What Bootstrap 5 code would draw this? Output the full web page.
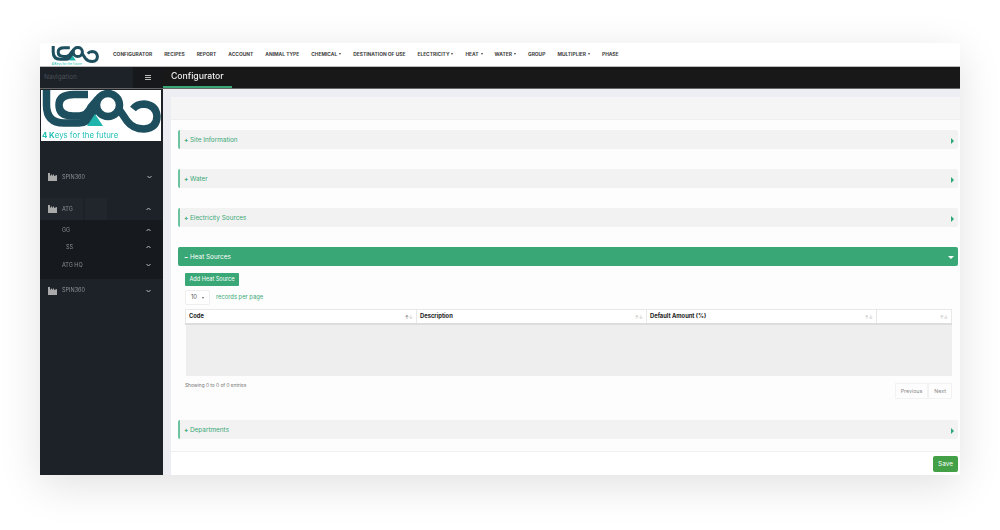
<!DOCTYPE html>
<html lang="en">
<head>
<meta charset="utf-8">
<title>Configurator</title>
<link rel="stylesheet" href="https://cdn.jsdelivr.net/npm/bootstrap@5.3.0/dist/css/bootstrap.min.css">
<style>
html,body{height:530px;overflow:hidden;background:#fff}
body{font-family:Inter,"Noto Sans",sans-serif;color:#555}
.app-frame{width:920px;height:432px;margin:43px 0 0 40px;box-shadow:0 10px 40px rgba(0,0,0,.12);background:#fff;overflow:hidden;display:flex;flex-direction:column;filter:blur(.3px)}
.top-nav{height:24px;flex:none;padding:0 0 0 11px;gap:12px;border-bottom:1px solid #bbb;background:#fff}
.top-logo{width:48px;height:20px;margin-top:2px;margin-right:2px}
.top-link{font-size:4.9px;font-weight:700;color:#444;text-decoration:none;white-space:nowrap}
.top-link.has-caret::after{content:"";display:inline-block;margin-left:2px;vertical-align:1px;border-top:2px solid #444;border-left:1.6px solid transparent;border-right:1.6px solid transparent}
.title-row{height:22px;flex:none;background:#181818;border-bottom:1px solid #666}
.nav-head{width:123px;background:#1c2227;color:#4a5058;font-size:6.5px;padding-left:4px;height:100%}
.nav-label{padding-top:1px}
.nav-burger{width:30px;height:100%;background:#16181b;margin-left:auto}
.title-tab{width:69px;height:100%;color:#eee;font-size:8.7px;font-weight:500;padding:1px 0 0 8px;border-bottom:2px solid #3aa876}
.main-row{flex:1;min-height:0}
.side-bar{width:123px;flex:none;background:#1c2227;color:#8b9096;font-size:5.5px}
.big-logo{width:120px;height:51px;margin:1px 0 0 1px;display:block;background:#fff}
.side-item{height:24px;padding:0 11px 0 8px;gap:5px}
.side-item .caret-end{margin-left:auto}
.side-item.later{padding-right:12.500px}
.side-item.active-row{height:22px;background:linear-gradient(90deg,#20262c 0 43px,#1c2227 43px 45px,#20262c 45px 67px,#1c2227 67px)}
.side-sub{background:#16191d;padding:1px 0 5px}
.side-subitem{height:17.5px;padding:0 12.500px 0 22px}
.side-subitem.deep{padding-left:26px}
.gap-first{height:24px}
.gap-second{height:9px}
.gutter{width:8px;flex:none;background:#eceef3}
.work-area{flex:1;min-width:0;min-height:0;display:flex;flex-direction:column;background:#eceef3;padding-top:8px}
.work-head{height:23px;flex:none;background:#f5f5f6;border-bottom:1px solid #eee}
.work-body{flex:1;min-height:0;padding:10px 2px 0 7px;background:#fdfdfd}
.acc-row{height:19px;background:#f2f2f3;border-left:2px solid #6cc3a0;border-radius:2px;padding:2px 4px 0;color:#3aa876;font-size:6.4px;margin-bottom:20px;gap:3px}
.acc-row.open{background:#3aa876;color:#fff;border-left-color:#3aa876;margin-bottom:0}
.acc-row.last{margin-bottom:0}
.acc-sign{font-weight:700;width:3px}
.acc-arrow{margin-left:auto;width:0;height:0;border-left:3.5px solid #2aa876;border-top:3px solid transparent;border-bottom:3px solid transparent}
.open .acc-arrow{border-top:3.5px solid #fff;border-left:3px solid transparent;border-right:3px solid transparent;border-bottom:0}
.heat-body{padding:7px 7px 0;height:154px}
.add-btn{background:#3aa876;border:0;color:#fff;font-size:5.6px;border-radius:1px;height:13px;width:54px;padding:0;line-height:13px;display:block}
.len-row{margin-top:4px;gap:6px;color:#3aa876;font-size:5.8px;height:15px}
.len-box{width:25px;height:15px;border:1px solid #eee;border-radius:2px;color:#555;padding:0 5px;background:#fff}
.len-box::after{content:"";margin-left:auto;border-top:2px solid #666;border-left:1.5px solid transparent;border-right:1.5px solid transparent}
.data-grid{width:767px;margin:4px 0 0;font-size:5.8px;border-collapse:collapse}
.data-grid th{height:14px;padding:0 3px;border:1px solid #e8e8e8;border-bottom:2px solid #ddd;color:#222;font-weight:700;background:#fff;vertical-align:middle}
.data-grid td{height:52px;background:#eee;padding:0;border:0}
.sort-mark{float:right;color:#bbb;font-weight:400;font-size:5px;margin-top:2px}
.sort-mark b{color:#666;font-weight:400}
.grid-info{color:#777;font-size:4.8px;margin-top:5px;line-height:8px}
.pager{width:767px;margin-top:-6px}
.pager span{display:block;height:16px;line-height:14px;font-size:5.3px;color:#888;border:1px solid #f2f2f2;padding:0 5px}
.foot-row{height:24px;flex:none;border-top:1px solid #f0f0f0;background:#fff;padding-right:2px}
.save-btn{background:#43a047;border:0;color:#fff;font-size:6.4px;width:25px;height:16px;padding:0;border-radius:2px;line-height:16px}
</style>
</head>
<body>
<svg width="0" height="0" class="position-absolute" aria-hidden="true"><defs><g id="lcab-mark">
  <g fill="none" stroke="#1d4f5f" stroke-width="7.5">
    <path d="M5.500 0V15Q5.500 33 23 33H38Q47 33 51 24L55 14"/>
    <path d="M47 4.500H33Q18 4.500 18 15Q18 26 32 26H38Q46 26 50 17L57 9"/>
    <circle cx="67" cy="15" r="11.500"/>
    <path d="M77 18Q80 22 86 31Q92 39 103 39Q116 38 116 26Q115 15 103 14Q96 14 92 19"/>
  </g>
  <path d="M54 24L62 36H46Z" fill="#1fb5ad"/>
  <text x="1" y="48" font-family="Inter,sans-serif" font-size="7.800" fill="#1fbfb5"><tspan font-weight="700">4 K</tspan>eys for the future</text>
</g></defs></svg>
<div class="app-frame">
  <nav class="top-nav d-flex align-items-center">
    <svg class="top-logo" viewBox="0 0 120 50" aria-hidden="true"><use href="#lcab-mark"/></svg>
    <a class="top-link" href="#">CONFIGURATOR</a><a class="top-link" href="#">RECIPES</a><a class="top-link" href="#">REPORT</a><a class="top-link" href="#">ACCOUNT</a><a class="top-link" href="#">ANIMAL TYPE</a><a class="top-link has-caret" href="#">CHEMICAL</a><a class="top-link" href="#">DESTINATION OF USE</a><a class="top-link has-caret" href="#">ELECTRICITY</a><a class="top-link has-caret" href="#">HEAT</a><a class="top-link has-caret" href="#">WATER</a><a class="top-link" href="#">GROUP</a><a class="top-link has-caret" href="#">MULTIPLIER</a><a class="top-link" href="#">PHASE</a>
  </nav>
  <div class="title-row d-flex">
    <div class="nav-head d-flex align-items-center"><span class="nav-label">Navigation</span><div class="nav-burger d-flex align-items-center justify-content-center"><svg width="6" height="5" viewBox="0 0 6 5" aria-hidden="true"><path d="M0 .5h6M0 2.500h6M0 4.500h6" stroke="#bbb"/></svg></div></div>
    <div class="title-tab d-flex align-items-center">Configurator</div>
  </div>
  <div class="main-row d-flex">
    <aside class="side-bar">
      <svg class="big-logo" viewBox="0 0 120 51" aria-hidden="true"><use href="#lcab-mark"/></svg>
      <div class="gap-first"></div>
      <div class="side-item d-flex align-items-center">
        <svg width="9" height="8" viewBox="0 0 9 8" aria-hidden="true"><path fill="#aaa" d="M0 0h2v3l2-2v2l2-2v2l3-1v6H0z"/></svg>SPIN360
        <svg class="caret-end" width="5" height="4" viewBox="0 0 5 4" aria-hidden="true"><path d="M.5 1l2 2 2-2" stroke="#bbb" fill="none"/></svg>
      </div>
      <div class="gap-second"></div>
      <div class="side-item later active-row d-flex align-items-center">
        <svg width="9" height="8" viewBox="0 0 9 8" aria-hidden="true"><path fill="#aaa" d="M0 0h2v3l2-2v2l2-2v2l3-1v6H0z"/></svg>ATG
        <svg class="caret-end" width="5" height="4" viewBox="0 0 5 4" aria-hidden="true"><path d="M.5 3l2-2 2 2" stroke="#bbb" fill="none"/></svg>
      </div>
      <div class="side-sub">
        <div class="side-subitem d-flex align-items-center justify-content-between">GG<svg width="5" height="4" viewBox="0 0 5 4" aria-hidden="true"><path d="M.5 3l2-2 2 2" stroke="#bbb" fill="none"/></svg></div>
        <div class="side-subitem deep d-flex align-items-center justify-content-between">SS<svg width="5" height="4" viewBox="0 0 5 4" aria-hidden="true"><path d="M.5 3l2-2 2 2" stroke="#bbb" fill="none"/></svg></div>
        <div class="side-subitem d-flex align-items-center justify-content-between">ATG HQ<svg width="5" height="4" viewBox="0 0 5 4" aria-hidden="true"><path d="M.5 1l2 2 2-2" stroke="#bbb" fill="none"/></svg></div>
      </div>
      <div class="side-item later d-flex align-items-center">
        <svg width="9" height="8" viewBox="0 0 9 8" aria-hidden="true"><path fill="#aaa" d="M0 0h2v3l2-2v2l2-2v2l3-1v6H0z"/></svg>SPIN360
        <svg class="caret-end" width="5" height="4" viewBox="0 0 5 4" aria-hidden="true"><path d="M.5 1l2 2 2-2" stroke="#bbb" fill="none"/></svg>
      </div>
    </aside>
    <div class="gutter"></div>
    <div class="work-area">
      <div class="work-head"></div>
      <div class="work-body">
        <div class="acc-row d-flex align-items-center"><span class="acc-sign">+</span><span>Site Information</span><i class="acc-arrow"></i></div>
        <div class="acc-row d-flex align-items-center"><span class="acc-sign">+</span><span>Water</span><i class="acc-arrow"></i></div>
        <div class="acc-row d-flex align-items-center"><span class="acc-sign">+</span><span>Electricity Sources</span><i class="acc-arrow"></i></div>
        <div class="acc-row open d-flex align-items-center"><span class="acc-sign">−</span><span>Heat Sources</span><i class="acc-arrow"></i></div>
        <div class="heat-body">
          <button class="btn add-btn" type="button">Add Heat Source</button>
          <div class="len-row d-flex align-items-center"><div class="len-box d-flex align-items-center">10</div>records per page</div>
          <table class="data-grid">
            <thead><tr><th style="width:231px">Code<span class="sort-mark"><b>↑</b>↓</span></th><th style="width:230px">Description<span class="sort-mark">↑↓</span></th><th style="width:230px">Default Amount (%)<span class="sort-mark">↑↓</span></th><th><span class="sort-mark">↑↓</span></th></tr></thead>
            <tbody><tr><td colspan="4"></td></tr></tbody>
          </table>
          <div class="grid-info">Showing 0 to 0 of 0 entries</div>
          <div class="pager d-flex justify-content-end"><span>Previous</span><span>Next</span></div>
        </div>
        <div class="acc-row last d-flex align-items-center"><span class="acc-sign">+</span><span>Departments</span><i class="acc-arrow"></i></div>
      </div>
      <div class="foot-row d-flex align-items-center justify-content-end"><button class="btn save-btn" type="button">Save</button></div>
    </div>
  </div>
</div>
<script src="https://cdn.jsdelivr.net/npm/bootstrap@5.3.0/dist/js/bootstrap.bundle.min.js"></script>
</body>
</html>
